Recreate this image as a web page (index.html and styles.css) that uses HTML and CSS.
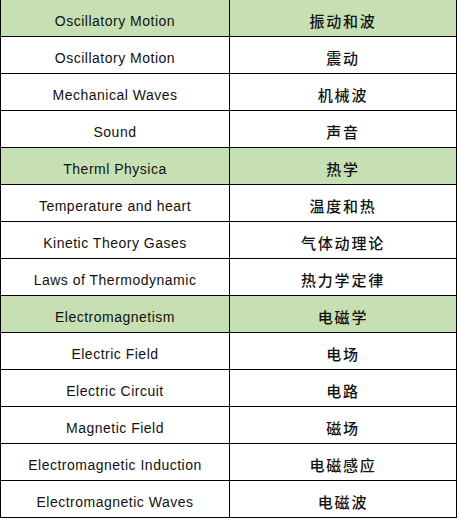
FILE: index.html
```html
<!DOCTYPE html>
<html lang="zh">
<head>
<meta charset="utf-8">
<title>Physics Topics</title>
<link rel="stylesheet" href="styles.css">
</head>
<body>
<div class="table">
  <div class="cell head en">Oscillatory Motion</div><div class="cell head zh">振动和波</div>
  <div class="cell en">Oscillatory Motion</div><div class="cell zh">震动</div>
  <div class="cell en">Mechanical Waves</div><div class="cell zh">机械波</div>
  <div class="cell en">Sound</div><div class="cell zh">声音</div>
  <div class="cell head en">Therml Physica</div><div class="cell head zh">热学</div>
  <div class="cell en">Temperature and heart</div><div class="cell zh">温度和热</div>
  <div class="cell en">Kinetic Theory Gases</div><div class="cell zh">气体动理论</div>
  <div class="cell en">Laws of Thermodynamic</div><div class="cell zh">热力学定律</div>
  <div class="cell head en">Electromagnetism</div><div class="cell head zh">电磁学</div>
  <div class="cell en">Electric Field</div><div class="cell zh">电场</div>
  <div class="cell en">Electric Circuit</div><div class="cell zh">电路</div>
  <div class="cell en">Magnetic Field</div><div class="cell zh">磁场</div>
  <div class="cell en">Electromagnetic Induction</div><div class="cell zh">电磁感应</div>
  <div class="cell en">Electromagnetic Waves</div><div class="cell zh">电磁波</div>
</div>
</body>
</html>
```
FILE: styles.css
```css
html, body {
  margin: 0;
  padding: 0;
  background: #ffffff;
}

.table {
  display: grid;
  grid-template-columns: 229px 227px;
  width: 457px;
  box-sizing: border-box;
  border-left: 1px solid #000;
  border-top: 1px solid #000;
  margin-top: -1px;
}

.cell {
  box-sizing: border-box;
  height: 37px;
  border-right: 1px solid #000;
  border-bottom: 1px solid #000;
  display: flex;
  align-items: center;
  justify-content: center;
  padding-top: 5px;
  color: #111;
  background: #ffffff;
  white-space: nowrap;
}

.head {
  background: #c6e0b4;
}

.en {
  font-family: "Liberation Sans", Arial, sans-serif;
  font-size: 14px;
  letter-spacing: 0.5px;
}

.zh {
  font-family: "Noto Sans CJK SC", "Noto Sans", sans-serif;
  font-size: 15px;
  font-weight: 500;
  letter-spacing: 1.8px;
  padding-top: 4px;
}
```
